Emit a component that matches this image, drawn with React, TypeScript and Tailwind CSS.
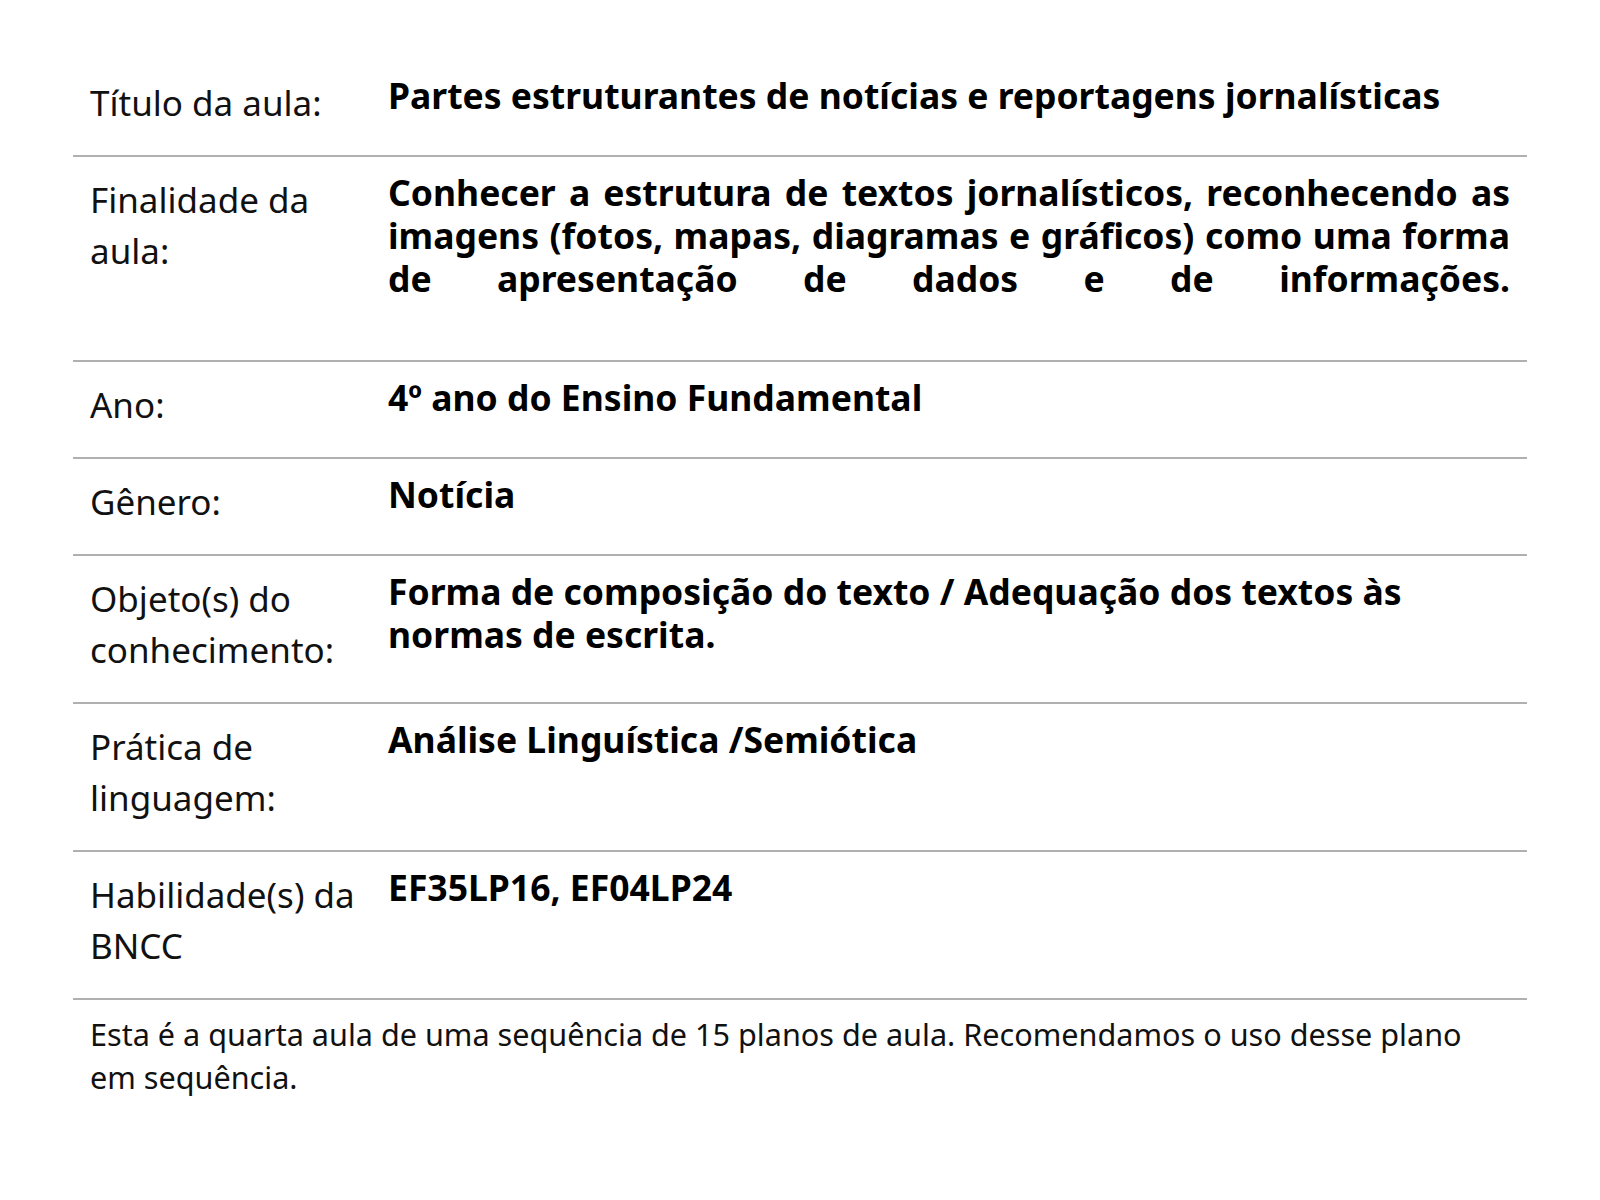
const rows: { label: string[]; value: string; justify?: boolean }[] = [
  { label: ['Título da aula:'], value: 'Partes estruturantes de notícias e reportagens jornalísticas' },
  {
    label: ['Finalidade da', 'aula:'],
    value:
      'Conhecer a estrutura de textos jornalísticos, reconhecendo as imagens (fotos, mapas, diagramas e gráficos) como uma forma de apresentação de dados e de informações.',
    justify: true,
  },
  { label: ['Ano:'], value: '4º ano do Ensino Fundamental' },
  { label: ['Gênero:'], value: 'Notícia' },
  {
    label: ['Objeto(s) do', 'conhecimento:'],
    value: 'Forma de composição do texto / Adequação dos textos às normas de escrita.',
  },
  { label: ['Prática de', 'linguagem:'], value: 'Análise Linguística /Semiótica' },
  { label: ['Habilidade(s) da', 'BNCC'], value: 'EF35LP16, EF04LP24' },
]

export default function App() {
  return (
    <div className="min-h-[1200px] w-[1600px] bg-white font-['Noto_Sans',sans-serif] text-[#111]">
      <div className="ml-[73px] w-[1454px] pt-[60px]">
        {rows.map((r, i) => (
          <div
            key={i}
            className="grid grid-cols-[298px_1fr] border-b-2 border-[#b0b0b0] pb-[27px] pl-[17px] pr-[17px]"
          >
            <div className="pt-[17px] text-[35px] leading-[51px]">
              {r.label.map((l, j) => (
                <div key={j}>{l}</div>
              ))}
            </div>
            <div
              className={
                r.justify
                  ? 'pt-[14px] pb-[33px] text-justify text-[35.5px] font-bold leading-[43px] text-black [text-align-last:justify]'
                  : 'pt-[14px] text-[35.5px] font-bold leading-[43px] text-black'
              }
            >
              {r.value}
            </div>
          </div>
        ))}
        <p className="pl-[17px] pr-[17px] pt-[13px] text-[30.6px] leading-[43px]">
          Esta é a quarta aula de uma sequência de 15 planos de aula. Recomendamos o uso desse plano em sequência.
        </p>
      </div>
    </div>
  )
}
